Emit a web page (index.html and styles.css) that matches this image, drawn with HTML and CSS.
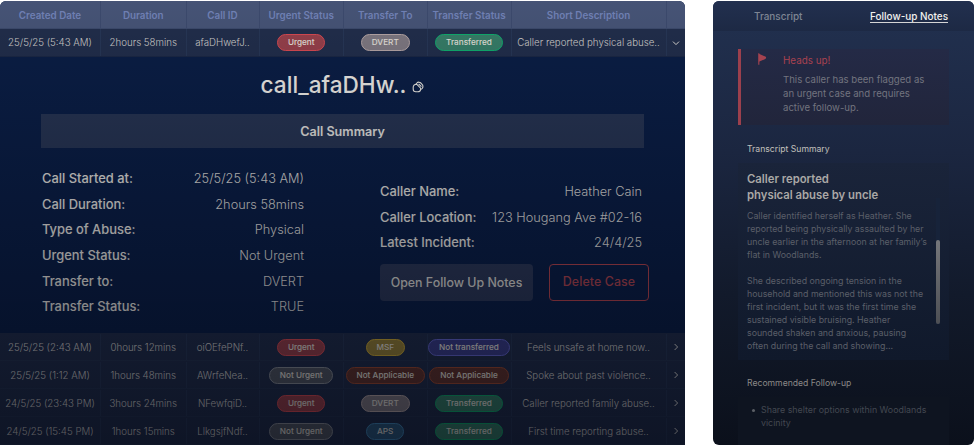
FILE: index.html
```html
<!DOCTYPE html>
<html lang="en">
<head>
<meta charset="utf-8">
<title>Call cases</title>
<link rel="stylesheet" href="styles.css">
</head>
<body>
<main class="page">
  <section class="cases">
    <div class="row head">
      <div>Created Date</div><div>Duration</div><div>Call ID</div><div>Urgent Status</div><div>Transfer To</div><div>Transfer Status</div><div>Short Description</div><div></div>
    </div>
    <div class="row open">
      <div>25/5/25 (5:43 AM)</div><div>2hours 58mins</div><div>afaDHwefJ..</div>
      <div><span class="pill red">Urgent</span></div><div><span class="pill taupe">DVERT</span></div><div><span class="pill green">Transferred</span></div>
      <div>Caller reported physical abuse..</div>
      <div><svg class="chev" viewBox="0 0 8 8"><path d="M1 2.6 4 5.6 7 2.6"/></svg></div>
    </div>
    <article class="detail">
      <h1 class="title">call_afaDHw..
        <svg class="copy" viewBox="0 0 12 12"><path d="M4 3.2 4.9 2Q5.8 1 7 1.2L8.6 1.8 10.6 4Q11 4.8 10.9 6L10.4 7.2Q9.9 8 9 8.1"/><path d="M4.6 3.2 8.6 7.2V8.6Q8.2 10.8 5.8 10.8H3.8Q1.2 10.6 1.2 8.2V6.3Q1.2 3.4 4.6 3.2ZM6.6 2.8 9.4 5.6"/></svg>
      </h1>
      <h2 class="banner">Call Summary</h2>
      <div class="columns">
        <dl class="facts">
          <div><dt>Call Started at:</dt><dd>25/5/25 (5:43 AM)</dd></div>
          <div><dt>Call Duration:</dt><dd>2hours 58mins</dd></div>
          <div><dt>Type of Abuse:</dt><dd>Physical</dd></div>
          <div><dt>Urgent Status:</dt><dd>Not Urgent</dd></div>
          <div><dt>Transfer to:</dt><dd>DVERT</dd></div>
          <div><dt>Transfer Status:</dt><dd>TRUE</dd></div>
        </dl>
        <div class="caller">
          <dl class="facts">
            <div><dt>Caller Name:</dt><dd>Heather Cain</dd></div>
            <div><dt>Caller Location:</dt><dd>123 Hougang Ave #02-16</dd></div>
            <div><dt>Latest Incident:</dt><dd>24/4/25</dd></div>
          </dl>
          <div class="actions">
            <button class="btn notes">Open Follow Up Notes</button>
            <button class="btn delete">Delete Case</button>
          </div>
        </div>
      </div>
    </article>
    <div class="row">
      <div>25/5/25 (2:43 AM)</div><div>0hours 12mins</div><div>oiOEfePNf..</div>
      <div><span class="pill red">Urgent</span></div><div><span class="pill yellow">MSF</span></div><div><span class="pill indigo">Not transferred</span></div>
      <div>Feels unsafe at home now..</div>
      <div><svg class="chev" viewBox="0 0 8 8"><path d="M2.6 1 5.6 4 2.6 7"/></svg></div>
    </div>
    <div class="row">
      <div>25/5/25 (1:12 AM)</div><div>1hours 48mins</div><div>AWrfeNea..</div>
      <div><span class="pill gray">Not Urgent</span></div><div><span class="pill rust">Not Applicable</span></div><div><span class="pill rust">Not Applicable</span></div>
      <div>Spoke about past violence..</div>
      <div><svg class="chev" viewBox="0 0 8 8"><path d="M2.6 1 5.6 4 2.6 7"/></svg></div>
    </div>
    <div class="row">
      <div>24/5/25 (23:43 PM)</div><div>3hours 24mins</div><div>NFewfqiD..</div>
      <div><span class="pill red">Urgent</span></div><div><span class="pill taupe">DVERT</span></div><div><span class="pill green">Transferred</span></div>
      <div>Caller reported family abuse..</div>
      <div><svg class="chev" viewBox="0 0 8 8"><path d="M2.6 1 5.6 4 2.6 7"/></svg></div>
    </div>
    <div class="row">
      <div>24/5/25 (15:45 PM)</div><div>1hours 15mins</div><div>LlkgsjfNdf..</div>
      <div><span class="pill gray">Not Urgent</span></div><div><span class="pill blue">APS</span></div><div><span class="pill green">Transferred</span></div>
      <div>First time reporting abuse..</div>
      <div><svg class="chev" viewBox="0 0 8 8"><path d="M2.6 1 5.6 4 2.6 7"/></svg></div>
    </div>
  </section>

  <aside class="panel">
    <nav class="tabs"><span class="tab">Transcript</span><span class="tab active">Follow-up Notes</span></nav>
    <div class="alert">
      <svg class="flag" viewBox="0 0 10 12"><path d="M.8 .3V11.7" stroke="#a54350" stroke-width="1.1"/><path d="M.8 .8 7.3 3.6Q9 4.8 7.3 6L.8 8.8Z" fill="#a54350"/></svg>
      <div>
        <h3 class="alert-title">Heads up!</h3>
        <p class="alert-text">This caller has been flagged as<br>an urgent case and requires<br>active follow-up.</p>
      </div>
    </div>
    <h4 class="label">Transcript Summary</h4>
    <div class="summary">
      <div class="summary-body">
        <h3 class="summary-title">Caller reported<br>physical abuse by uncle</h3>
        <p>Caller identified herself as Heather. She<br>reported being physically assaulted by her<br>uncle earlier in the afternoon at her family’s<br>flat in Woodlands.</p>
        <p>She described ongoing tension in the<br>household and mentioned this was not the<br>first incident, but it was the first time she<br>sustained visible bruising. Heather<br>sounded shaken and anxious, pausing<br>often during the call and showing...</p>
      </div>
      <div class="track"><div class="thumb"></div></div>
    </div>
    <h4 class="label follow">Recommended Follow-up</h4>
    <ul class="tips"><li>Share shelter options within Woodlands<br>vicinity</li></ul>
  </aside>
</main>
</body>
</html>
```
FILE: styles.css
```css
* { box-sizing: border-box; margin: 0; padding: 0; }
body { background: #fff; font-family: Inter, "Liberation Sans", sans-serif; color: #fff; overflow: hidden; }
.page { display: flex; gap: 28px; width: 974px; height: 446px; padding: 1px 0; }

/* case table */
.cases { position: relative; width: 685px; height: 444px; border-radius: 6px 6px 0 0; overflow: hidden; background: #0b1f47; }
.cases::after { content: ""; position: absolute; inset: 0; background: linear-gradient(rgba(0,2,10,.03), rgba(0,2,10,.59)); pointer-events: none; }
.row { display: grid; grid-template-columns: 101px 85.5px 73px 84.5px 83.5px 84px 155px 18.5px; height: 28px; padding-top: 1px; background: #222f4d; border-bottom: 1px solid #263553; font-size: 9.7px; font-weight: 300; color: #d4d2cf; }
.row > div { display: flex; align-items: center; justify-content: center; border-right: 1px solid #283858; white-space: nowrap; }
.row > div:last-child { border-right: 0; }
.head { padding-top: 0; background: #485679; border-bottom-color: #3e4c6e; font-size: 9.85px; font-weight: 600; color: #7485bb; }
.head > div { border-right-color: #3e4c70; }
.open { padding-top: 0; border-bottom-color: #1b2846; }
.pill { height: 17px; line-height: 15px; padding: 0 9.8px; border: 1px solid; border-radius: 9px; font-size: 8.2px; font-weight: 500; color: #e9e5df; }
.red { background: #9a424d; border-color: #dc4c54; }
.taupe { background: #817b84; border-color: #b9a9a9; }
.green { background: #38806a; border-color: #10b070; }
.yellow { background: #988339; border-color: #d0ad35; }
.indigo { background: #3b3f8c; border-color: #6467d0; }
.gray { background: #535965; border-color: #8a8f98; }
.rust { background: #63352f; border-color: #a04b32; }
.blue { background: #2e5c82; border-color: #438bbd; }
.chev { width: 8px; height: 8px; fill: none; stroke: #dfddd9; stroke-width: 1; }

/* expanded case */
.detail { height: 276px; padding: 0 41px; }
.title { display: flex; align-items: center; justify-content: center; gap: 6px; height: 57px; padding-bottom: 2px; font-size: 22.6px; font-weight: 500; color: #f5f3ee; }
.copy { width: 12px; height: 12px; margin-top: 4px; fill: none; stroke: #f0eee8; stroke-width: 1.1; }
.banner { height: 34px; width: 603px; background: #283655; line-height: 35px; text-align: center; font-size: 12.6px; font-weight: 600; color: #e9e7e3; }
.columns { display: flex; justify-content: space-between; padding: 18px 2px 0 1px; }
.columns > .facts { width: 262px; }
.facts > div { display: flex; justify-content: space-between; height: 25.7px; line-height: 26px; font-size: 12.75px; white-space: nowrap; }
.facts dt { font-size: 12.9px; font-weight: 500; color: #e8e6e1; }
.facts dd { font-weight: 300; color: #dfdedb; }
.caller { width: 262px; padding-top: 13px; }
.actions { display: flex; gap: 16px; margin-top: 8px; width: 269px; }
.btn { height: 37px; border-radius: 4px; font: 500 12.4px Inter, sans-serif; white-space: nowrap; }
.notes { width: 153px; padding-bottom: 1px; border: 0; background: #2c3858; color: #d9d7d2; }
.delete { width: 100px; padding-bottom: 2px; border: 1px solid #b4454f; background: transparent; color: #ae4550; letter-spacing: .1px; }

/* follow-up panel */
.panel { width: 261px; height: 444px; border-radius: 6px; overflow: hidden; background: linear-gradient(#223150, #1b2640 34%, #121a2b 66%, #0b101b); }
.tabs { display: flex; justify-content: space-between; height: 30px; padding: 8.5px 26px 0 41px; font-size: 9.95px; line-height: 12px; background: linear-gradient(#22304f, #1d2944); }
.tab { color: #7e8593; font-weight: 500; }
.tab.active { height: 13px; color: #f2f1ee; border-bottom: 1px solid #d5d5d5; }
.alert { display: flex; width: 211px; height: 76px; margin: 18px 0 0 25px; padding-left: 16.5px; border-left: 3px solid #9c404d; background: linear-gradient(#242a46, #21253b); }
.flag { width: 10px; height: 12px; margin: 4px 15.5px 0 0; fill: none; }
.alert-title { margin-top: 4px; font-size: 9.85px; line-height: 14px; font-weight: 400; color: #a94250; }
.alert-text { margin-top: 6px; font-size: 9.6px; line-height: 14px; color: #72747f; }
.label { margin: 18px 0 0 34px; font-size: 8.65px; line-height: 12px; font-weight: 400; color: #c2c0bc; }
.summary { display: flex; width: 211px; height: 197px; margin: 8px 0 0 25px; padding: 8px 9px 0; justify-content: space-between; background: linear-gradient(#1a243a, #10192b); }
.summary-body { white-space: nowrap; }
.summary-title { font-size: 11.3px; line-height: 16px; font-weight: 600; color: #aaa8a6; margin-bottom: 6px; }
.summary p { font-size: 8.8px; line-height: 13.1px; color: #5b5f69; margin-bottom: 12.6px; }
.track { width: 4px; height: 126px; margin-top: 27px; padding-top: 42px; background: #17233a; }
.thumb { height: 84px; border-radius: 2px; background: linear-gradient(#75767a, #4d4f54); }
.label.follow { margin-top: 17px; color: #8b8987; }
.tips { width: 211px; height: 60px; margin: 8px 0 0 25px; padding: 5.5px 0 0 14px; list-style: none; font-size: 8.85px; line-height: 13px; color: #434851; background: #0e1420; }
.tips li { display: flex; gap: 6px; white-space: nowrap; }
.tips li::before { content: ""; flex: none; width: 3px; height: 3px; margin-top: 6px; border-radius: 50%; background: #5b5f66; }
```
